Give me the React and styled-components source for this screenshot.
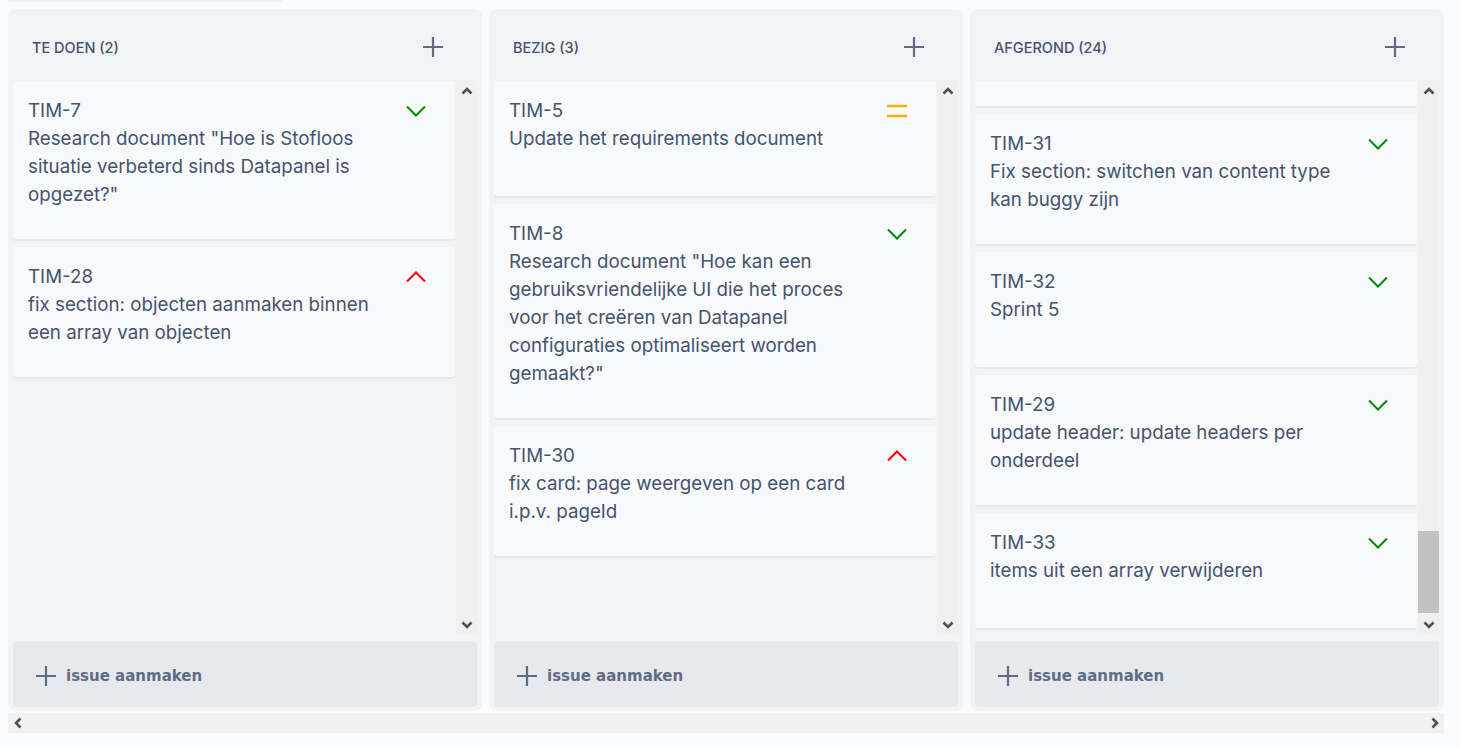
import React, { useLayoutEffect, useRef, useState } from "react";
import styled, { createGlobalStyle } from "styled-components";

const GlobalStyle = createGlobalStyle`
  body {
    margin: 0 8px;
    background: #fafbfc;
    font-family: "Inter", "Noto Sans", sans-serif;
    color: #44546f;
  }
`;

// done issues above the visible part of the AFGEROND column
const hiddenDone = [
  "Opzet project repository en koppelen van de Datapanel omgeving aan de ontwikkelstraat en de testomgeving van het team",
  "Datapanel koppelen aan de API van het content management systeem",
  "Research document opzetten: onderzoek naar bestaande configuratie tools",
  "fix header: titel van de pagina wordt te lang en loopt buiten de header",
  "Plan van aanpak schrijven en laten goedkeuren door de opdrachtgever",
  "card component maken voor het tonen van content items in een overzicht",
  "section component maken met ondersteuning voor geneste secties",
  "page overzicht maken waarin alle pagina's van een project zichtbaar zijn",
  "content types ophalen uit de configuratie en tonen in de editor",
  "velden valideren voordat een configuratie opgeslagen kan worden",
  "opslaan van configuratie in de database van het project en de koppeling testen",
  "styling van formulieren gelijk trekken met de huisstijl van Stofloos en Datapanel",
  "fix card: verwijderen van een card werkt niet wanneer er meerdere cards open staan",
  "Retrospective sprint 4 verwerken in het verslag en actiepunten vastleggen voor het team",
  "feedback van de opdrachtgever verwerken in het ontwerp van de configuratie editor",
  "Sprint 4 afronden en demo voorbereiden voor de opdrachtgever en de begeleider",
  "fix section: titel wordt niet opgeslagen wanneer een sectie opnieuw geopend wordt",
  "update footer: links naar documentatie en contactgegevens van het ontwikkelteam",
  "Sprint 3 review houden en de planning van sprint 4 samen met het team opstellen",
].map((title, i) => ({ key: `TIM-${9 + i}`, title, priority: "low" }));

const columns = [
  {
    name: "TE DOEN",
    count: 2,
    issues: [
      {
        key: "TIM-7",
        title:
          'Research document "Hoe is Stofloos situatie verbeterd sinds Datapanel is opgezet?"',
        priority: "low",
      },
      {
        key: "TIM-28",
        title: "fix section: objecten aanmaken binnen een array van objecten",
        priority: "high",
      },
    ],
  },
  {
    name: "BEZIG",
    count: 3,
    issues: [
      { key: "TIM-5", title: "Update het requirements document", priority: "medium" },
      {
        key: "TIM-8",
        title:
          'Research document "Hoe kan een gebruiksvriendelijke UI die het proces voor het creëren van Datapanel configuraties optimaliseert worden gemaakt?"',
        priority: "low",
      },
      {
        key: "TIM-30",
        title: "fix card: page weergeven op een card i.p.v. pageId",
        priority: "high",
      },
    ],
  },
  {
    name: "AFGEROND",
    count: 24,
    scrolled: true,
    issues: [
      ...hiddenDone,
      {
        key: "TIM-31",
        title: "Fix section: switchen van content type kan buggy zijn",
        priority: "low",
      },
      { key: "TIM-32", title: "Sprint 5", priority: "low" },
      {
        key: "TIM-29",
        title: "update header: update headers per onderdeel",
        priority: "low",
      },
      { key: "TIM-33", title: "items uit een array verwijderen", priority: "low" },
    ],
  },
];

const PriorityIcon = ({ level }) => {
  if (level === "medium") {
    return (
      <svg width="20" height="20" viewBox="0 0 20 20">
        <path d="M0 5h20M0 15h20" stroke="#ffab00" strokeWidth="2.4" />
      </svg>
    );
  }
  const up = level === "high";
  return (
    <svg width="20" height="20" viewBox="0 0 20 20">
      <path
        d={up ? "M1 14.5l9-9 9 9" : "M1 5.5l9 9 9-9"}
        fill="none"
        stroke={up ? "#ff0000" : "#008a00"}
        strokeWidth="2"
      />
    </svg>
  );
};

const PlusIcon = ({ size = 20 }) => (
  <svg width={size} height={size} viewBox="0 0 20 20">
    <path d="M10 0v20M0 10h20" stroke="#5e6c84" strokeWidth="2.2" />
  </svg>
);

// small scrollbar arrows, chromium style
const arrowPaths = {
  up: "M1.5 7.5L6 3l4.5 4.5",
  down: "M1.5 4.5L6 9l4.5-4.5",
  left: "M7.5 1.5L3 6l4.5 4.5",
  right: "M4.5 1.5L9 6l-4.5 4.5",
};

const Arrow = ({ dir }) => (
  <svg width="12" height="12" viewBox="0 0 12 12">
    <path d={arrowPaths[dir]} fill="none" stroke="#505050" strokeWidth="2.6" />
  </svg>
);

const Column = ({ column }) => {
  const listRef = useRef(null);
  const trackRef = useRef(null);
  const [thumb, setThumb] = useState(null);

  useLayoutEffect(() => {
    const list = listRef.current;
    if (column.scrolled) list.scrollTop = list.scrollHeight;
    const { scrollTop, scrollHeight, clientHeight } = list;
    if (scrollHeight > clientHeight) {
      const track = trackRef.current.clientHeight;
      setThumb({
        top: (scrollTop / scrollHeight) * track,
        height: (clientHeight / scrollHeight) * track,
      });
    }
  }, [column.scrolled]);

  return (
    <ColumnBox>
      <ColumnHeader>
        <ColumnTitle>
          {column.name} ({column.count})
        </ColumnTitle>
        <PlusIcon />
      </ColumnHeader>
      <ListArea>
        <CardList ref={listRef}>
          {column.issues.map((issue) => (
            <Card key={issue.key}>
              <CardText>
                <div>{issue.key}</div>
                <div>{issue.title}</div>
              </CardText>
              <PriorityIcon level={issue.priority} />
            </Card>
          ))}
        </CardList>
        <VRail>
          <ArrowBox>
            <Arrow dir="up" />
          </ArrowBox>
          <Track ref={trackRef}>
            {thumb && (
              <Thumb style={{ marginTop: thumb.top, height: thumb.height }} />
            )}
          </Track>
          <ArrowBox>
            <Arrow dir="down" />
          </ArrowBox>
        </VRail>
      </ListArea>
      <CreateButton>
        <PlusIcon />
        issue aanmaken
      </CreateButton>
    </ColumnBox>
  );
};

const App = () => (
  <>
    <GlobalStyle />
    <TopStub />
    <Board>
      <ColumnsRow>
        {columns.map((column) => (
          <Column key={column.name} column={column} />
        ))}
      </ColumnsRow>
      <HRail>
        <ArrowBox>
          <Arrow dir="left" />
        </ArrowBox>
        <ArrowBox>
          <Arrow dir="right" />
        </ArrowBox>
      </HRail>
    </Board>
  </>
);

const TopStub = styled.div`
  width: 274px;
  height: 2px;
  background: #eff0f3;
  border-radius: 0 0 6px 6px;
`;

const Board = styled.div`
  margin-top: 7px;
  width: 1436px;
  display: flex;
  flex-direction: column;
  gap: 2px;
`;

const ColumnsRow = styled.div`
  display: flex;
  gap: 7px;
`;

const HRail = styled.div`
  height: 20px;
  background: #f1f1f1;
  display: flex;
  justify-content: space-between;
  align-items: center;
`;

const ArrowBox = styled.div`
  width: 21px;
  height: 21px;
  flex: 0 0 21px;
  display: flex;
  align-items: center;
  justify-content: center;
`;

const ColumnBox = styled.section`
  flex: 0 0 474px;
  height: 702px;
  background: #f2f3f7;
  border-radius: 8px;
  display: flex;
  flex-direction: column;
  padding: 0 5px 4px;
  box-sizing: border-box;
`;

const ColumnHeader = styled.header`
  height: 72px;
  flex: 0 0 72px;
  box-sizing: border-box;
  display: flex;
  align-items: center;
  justify-content: space-between;
  padding: 4px 34px 0 19px;
`;

const ColumnTitle = styled.h2`
  margin: 0;
  font-size: 14.5px;
  font-weight: 500;
  color: #44546f;
`;

const ListArea = styled.div`
  height: 553px;
  flex: 0 0 553px;
  display: flex;
`;

const CardList = styled.div`
  flex: 1;
  overflow-y: scroll;
  scrollbar-width: none;
  display: flex;
  flex-direction: column;
  gap: 8px;
  padding-bottom: 6px;
  box-sizing: border-box;
`;

const VRail = styled.div`
  width: 21px;
  flex: 0 0 21px;
  background: #f0f0f0;
  display: flex;
  flex-direction: column;
  margin-left: 1px;
`;

const Track = styled.div`
  flex: 1;
  display: flex;
  flex-direction: column;
`;

const Thumb = styled.div`
  background: #c1c1c1;
`;

const Card = styled.article`
  flex: 0 0 auto;
  min-height: 115px;
  box-sizing: border-box;
  display: flex;
  justify-content: space-between;
  align-items: flex-start;
  padding: 16px 29px 30px 15px;
  background: #f8f9fb;
  border-radius: 3px;
  box-shadow: 0 2px 1px rgba(9, 30, 66, 0.05);

  svg {
    margin-top: 4px;
  }
`;

const CardText = styled.div`
  max-width: 355px;
  font-size: 18.75px;
  line-height: 28px;
  color: #44546f;
`;

const CreateButton = styled.button`
  margin-top: 7px;
  height: 66px;
  flex: 0 0 66px;
  border: none;
  border-radius: 4px;
  background: #e8e9ee;
  display: flex;
  align-items: center;
  gap: 10px;
  padding: 3px 0 0 23px;
  font-family: "DejaVu Sans", Verdana, sans-serif;
  font-weight: 700;
  font-size: 15px;
  color: #5e6c84;
  cursor: pointer;
`;

export default App;
